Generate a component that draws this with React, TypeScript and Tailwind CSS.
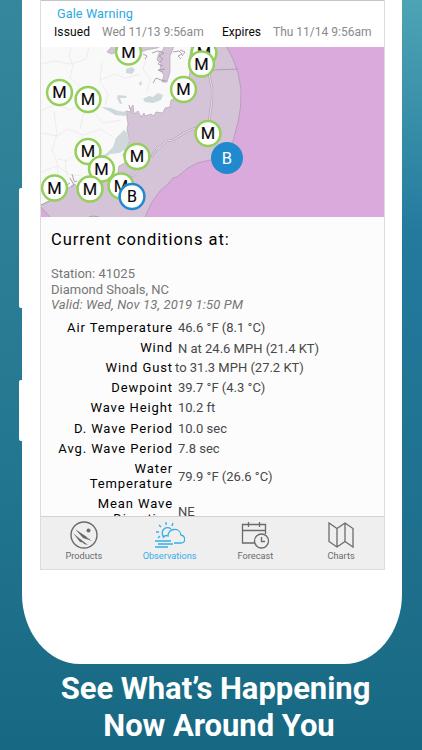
/**
 * Marine weather promo: phone frame with the station map and current conditions.
 */
import type { ReactNode } from 'react'

interface Marker {
  x: number
  y: number
  kind: 'M' | 'B' | 'active'
}

const MARKERS: Marker[] = [
  { x: 128.5, y: 52, kind: 'M' },
  { x: 204, y: 53, kind: 'M' },
  { x: 201.5, y: 64, kind: 'M' },
  { x: 183.5, y: 89.5, kind: 'M' },
  { x: 59.5, y: 92.5, kind: 'M' },
  { x: 88, y: 99.5, kind: 'M' },
  { x: 208, y: 133.5, kind: 'M' },
  { x: 88, y: 151.5, kind: 'M' },
  { x: 137, y: 156.5, kind: 'M' },
  { x: 101.5, y: 169, kind: 'M' },
  { x: 54.5, y: 188, kind: 'M' },
  { x: 90, y: 189, kind: 'M' },
  { x: 121, y: 186, kind: 'M' },
  { x: 132, y: 196.5, kind: 'B' },
  { x: 227, y: 158, kind: 'active' },
]

const ROWS = [
  { label: 'Air Temperature', value: '46.6 °F (8.1 °C)' },
  { label: 'Wind', value: 'N at 24.6 MPH (21.4 KT)', valueClass: 'translate-y-px' },
  { label: 'Wind Gust', value: 'to 31.3 MPH (27.2 KT)', valueClass: '-ml-[3px]' },
  { label: 'Dewpoint', value: '39.7 °F (4.3 °C)' },
  { label: 'Wave Height', value: '10.2 ft' },
  { label: 'D. Wave Period', value: '10.0 sec' },
  { label: 'Avg. Wave Period', value: '7.8 sec' },
  { label: 'Water Temperature', value: '79.9 °F (26.6 °C)' },
  { label: 'Mean Wave Direction', value: 'NE' },
]

function StationMap() {
  return (
    <svg viewBox="41 47 343 170" className="block h-[170px] w-[343px] shrink-0">
      <rect x="41" y="47" width="343" height="170" fill="#dbaadd" />
      {/* coastal zone */}
      <path
        d="M39 44H225L233 59L238 73L241 89L240.500 107L238 122L232 145L222 157L210 160L197 163L188 168L177 177L173 178L168 184L160 191L152 202L144 219H52L39 205Z"
        fill="#d5c3d8" stroke="#aa93ae" strokeWidth=".7"
      />
      {/* land */}
      <path
        d="M39 44H114L107 52L112 54L121 50L128 57L146 50L157 48L165 44L163 50L159 53L157 60L161 63L160 70L164 75L162 82L167 82L170 72L170 56L175 44H192L189 60L190 72L184 99L175 99L171 100L170 107L165 108L163 113L156 112L154 116L151 114L145 116L144 113L141 117L138 111L134 114L133 105L130 109L129 105L131 112L126 111L128 124L127 130L129 138L127 147L123 155L127 162L119 166L117 178L103 182L94 182L85 181L77 186L74 184L70 187L66 189L60 197L39 206Z"
        fill="#f8f9f8" stroke="#b3a8b5" strokeWidth=".7"
      />
      <g fill="#cfd8da">
        <path d="M126 69l6-2 3 3-3 4-6-1zM139 83l2-2 1 3-2 2zM143 99l6-3 4 1 5-4 5 2-2 5-8 3-8-1z" />
        <path d="M101 107l10 1 7 3 9 1-2 4-10-1-6-4zM96 157l10-3 7-7 3-9 8-8 3 3 2 8-3 8-7 4-9 1-5 4-10 2z" />
        <path d="M118 95l9 1-1 2-6 0 2 6-2 0-3-6z" />
      </g>
      <g fill="none" stroke="#e8eae9" strokeWidth=".8">
        <path d="M41 64l14-3 16 3 15-5 3-12M71 47l-2 9 4 9-3 13 9 7-2 15 7 11-4 18M41 111l15-7 14 6 9-4 16 7 8 10 18-3M41 133l16 3 11-7 15 6 17-6 13 8M54 111l3 23-5 16 6 15-1 16M82 136l-2 15-13 10-9-2M100 80l15-6 10 4 16-4M102 62l-2 19 8 13-3 12" />
        <path d="M146 58l-3 11 7 10-3 13M41 172l16-6 15 10 10-1M65 159l2 17 8 8" />
      </g>
      {/* inlets and barrier islands */}
      <g fill="none" stroke="#a79bab" strokeWidth=".9">
        <path d="M143 54l4 2-2 3M152 53l6-2 6 2-5 3 4 3-5 5 5 2M165 69l-7 1 5 2M166 81l-5-1-5-2-3 5M173 52l6-1 3 3-4 2 3 3M180 50l5 2-3 4" />
        <path d="M72 174l2 7M70 178l4 7-3 2M74 182l3-1M70 183l-3 2M213 70l25-1M41 205l18-9M89 217l4-1 6 1" />
      </g>
      <g fill="none" strokeLinecap="round" strokeLinejoin="round">
        <path d="M209 74l3 14v12l-3 22M195 128l-11 5-11 7-6 1-10 8-5 7M140 168l-8 8" stroke="#ab9db0" strokeWidth="2.200" />
        <path d="M209 74l3 14v12l-3 22M195 128l-11 5-11 7-6 1-10 8-5 7M140 168l-8 8" stroke="#e6dfe8" strokeWidth="1.100" />
      </g>
      {MARKERS.map((m) => (
        <g key={`${m.x}-${m.y}`}>
          <circle
            cx={m.x} cy={m.y} r={m.kind === 'active' ? 16 : 12.4}
            fill={m.kind === 'active' ? '#2189cd' : '#fff'}
            stroke={m.kind === 'M' ? '#94cf5b' : '#2189cd'}
            strokeWidth={m.kind === 'active' ? 0 : 2.5}
          />
          <text
            x={m.x} y={m.y + 5.9} textAnchor="middle" fontSize={m.kind === 'B' ? 16 : 16.5}
            fill={m.kind === 'active' ? '#fff' : '#080808'}
            stroke={m.kind === 'active' ? 'none' : '#080808'} strokeWidth=".15"
          >
            {m.kind === 'M' ? 'M' : 'B'}
          </text>
        </g>
      ))}
    </svg>
  )
}

function Tab({ label, active, children }: { label: string; active?: boolean; children: ReactNode }) {
  return (
    <div className={`flex w-[86.300px] flex-col items-center ${active ? 'text-[#36aee6]' : 'text-[#6b6b6b]'}`}>
      <svg viewBox="0 0 30 30" className="mt-[3px] h-[30px] w-[30px]" fill="none" stroke="currentColor" strokeWidth="1.300">
        {children}
      </svg>
      <span className="text-[9.200px] leading-[11px]">{label}</span>
    </div>
  )
}

export default function App() {
  return (
    <div className="relative h-[750px] w-[422px] overflow-hidden bg-linear-to-b from-[#35879d] via-[#247790] via-60% to-[#176983] font-[Roboto,sans-serif]">
      <div className="absolute top-0 right-0 h-[664px] w-5 bg-linear-to-b from-[#4ca4b4] via-[#237a9d] via-35% to-[#1c6c87]" />
      {/* side buttons */}
      <div className="absolute top-[188px] left-[19px] h-[120px] w-2 rounded-l-[2px] bg-white" />
      <div className="absolute top-[380px] left-[19px] h-[61px] w-2 rounded-l-[2px] bg-white" />

      <div className="relative ml-[22px] h-[664px] w-[380px] rounded-b-[58px_70px] bg-white">
        <div className="ml-[18px] flex h-[570px] w-[345px] flex-col overflow-hidden border-x border-b border-[#dcdcdc] bg-[#fcfcfc]">
          <div className="h-[47px] shrink-0 border-t border-[#c5c5c5] bg-white">
            <div className="pt-[5px] pl-4 text-[12.700px] leading-[16px] tracking-[.080px] text-[#2ba9df]">Gale Warning</div>
            <div className="flex pt-[3px] pl-[13px] text-[12px] leading-[15px] whitespace-nowrap text-[#8a8a8a]">
              <span className="w-[48px] tracking-[.1px] text-[#080808]">Issued</span>
              <span className="w-[120px]">Wed 11/13 9:56am</span>
              <span className="w-[51px] text-[#080808]">Expires</span>
              <span>Thu 11/14 9:56am</span>
            </div>
          </div>
          <StationMap />
          <div className="h-[300px] overflow-hidden rounded-t-[3px] bg-[#fcfcfc]">
            <h1 className="pt-[13px] pl-[10px] text-[16.500px] leading-[20px] tracking-[.960px] text-black">
              Current conditions at:
            </h1>
            <div className="pt-[16px] pl-[10px] text-[13px] leading-[15.700px] text-[#777]">
              <div>Station: 41025</div>
              <div>Diamond Shoals, NC</div>
              <div className="tracking-[.130px] italic">Valid: Wed, Nov 13, 2019 1:50 PM</div>
            </div>
            <div className="pt-[4px]">
              {ROWS.map((r) => (
                <div key={r.label} className="flex items-center gap-[5px] py-[2.600px] text-[13px] leading-[15px]">
                  <div className="w-[132px] pl-[14px] text-right tracking-[.900px] text-black">{r.label}</div>
                  <div className={`whitespace-nowrap text-[#484848] ${r.valueClass ?? ''}`}>{r.value}</div>
                </div>
              ))}
            </div>
          </div>
          <div className="flex h-[53px] shrink-0 border-t border-[#d2d2d2] bg-[#efefef]">
            <Tab label="Products">
              <circle cx="15" cy="15" r="13" strokeWidth="1.400" />
              <g fill="currentColor" stroke="none">
                <circle cx="19.500" cy="10.500" r="2" />
                <path d="M6 9l17 12-9-3zM4 13l12 10-5-1zM10 18l9 7-4-1zM9 11l9 6-4 1z" />
              </g>
            </Tab>
            <Tab label="Observations" active>
              <path d="M9 17a5 5 0 1 1 7-8M11 2v3M4 5l2 2M1 12h3M3 18l2-2M18 3l-1 3" />
              <path d="M8 18c1-2 3-3 5-2 0-8 12-9 13-1 5 1 5 8 0 8H19M0 21h16M3 24h15M0 27h13" />
            </Tab>
            <Tab label="Forecast">
              <path d="M15 23H2.500V4.500h23V14M2.500 10.500h23M8.500 2v5M19.500 2v5" />
              <circle cx="21.500" cy="21" r="7" />
              <path d="M21.500 17v4.500h3.500" />
            </Tab>
            <Tab label="Charts">
              <path d="M3 3l8 5.500L19 3l8 5.500V27l-8-5.500L11 27l-8-5.500zM11 8.500V27M19 3v18.500" />
            </Tab>
          </div>
        </div>
      </div>

      <div className="relative pt-[7px] pl-[9px] text-center text-[31px] leading-[36.500px] font-bold tracking-[-.050px] text-white">
        See What’s Happening
        <br />
        <span className="pl-[7px]">Now Around You</span>
      </div>
    </div>
  )
}
